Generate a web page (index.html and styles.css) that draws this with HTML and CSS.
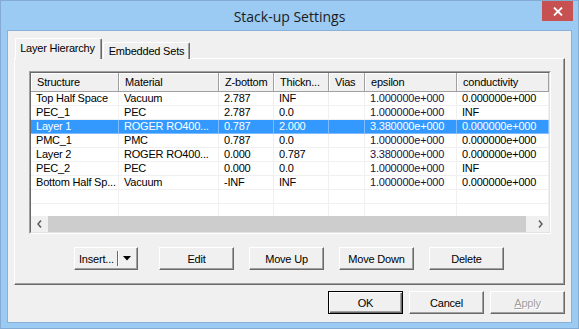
FILE: index.html
```html
<!DOCTYPE html>
<html>
<head>
<meta charset="utf-8">
<link rel="stylesheet" href="styles.css">
</head>
<body>
<div class="window">
  <div class="titlebar">
    <span class="title">Stack-up Settings</span>
    <div class="close">
      <svg width="10" height="9" viewBox="0 0 10 9"><path d="M1 0.5 L9 8.5 M9 0.5 L1 8.5" stroke="#fff" stroke-width="1.8" fill="none"/></svg>
    </div>
  </div>
  <div class="client">
    <div class="tabctl">
      <div class="tabs">
        <div class="tab active">Layer Hierarchy</div>
        <div class="tab">Embedded Sets</div>
      </div>
      <div class="panel">
        <div class="listview">
          <div class="lv-inner">
            <div class="row hdr">
              <div class="c">Structure</div><div class="c">Material</div><div class="c">Z-bottom</div><div class="c">Thickn...</div><div class="c">Vias</div><div class="c">epsilon</div><div class="c">conductivity</div>
            </div>
            <div class="rows">
              <div class="row"><div class="c">Top Half Space</div><div class="c">Vacuum</div><div class="c">2.787</div><div class="c">INF</div><div class="c"></div><div class="c eps">1.000000e+000</div><div class="c">0.000000e+000</div></div>
              <div class="row"><div class="c">PEC_1</div><div class="c">PEC</div><div class="c">2.787</div><div class="c">0.0</div><div class="c"></div><div class="c eps">1.000000e+000</div><div class="c">INF</div></div>
              <div class="row sel"><div class="c">Layer 1</div><div class="c">ROGER RO400...</div><div class="c">0.787</div><div class="c">2.000</div><div class="c"></div><div class="c eps">3.380000e+000</div><div class="c">0.000000e+000</div></div>
              <div class="row"><div class="c">PMC_1</div><div class="c">PMC</div><div class="c">0.787</div><div class="c">0.0</div><div class="c"></div><div class="c eps">1.000000e+000</div><div class="c">0.000000e+000</div></div>
              <div class="row"><div class="c">Layer 2</div><div class="c">ROGER RO400...</div><div class="c">0.000</div><div class="c">0.787</div><div class="c"></div><div class="c eps">3.380000e+000</div><div class="c">0.000000e+000</div></div>
              <div class="row"><div class="c">PEC_2</div><div class="c">PEC</div><div class="c">0.000</div><div class="c">0.0</div><div class="c"></div><div class="c eps">1.000000e+000</div><div class="c">INF</div></div>
              <div class="row"><div class="c">Bottom Half Sp...</div><div class="c">Vacuum</div><div class="c">-INF</div><div class="c">INF</div><div class="c"></div><div class="c eps">1.000000e+000</div><div class="c">0.000000e+000</div></div>
              <div class="row"><div class="c"></div><div class="c"></div><div class="c"></div><div class="c"></div><div class="c"></div><div class="c"></div><div class="c"></div></div>
              <div class="row"><div class="c"></div><div class="c"></div><div class="c"></div><div class="c"></div><div class="c"></div><div class="c"></div><div class="c"></div></div>
            </div>
            <div class="hscroll">
              <div class="arrow"><svg width="5" height="8" viewBox="0 0 5 8"><path d="M4 0.5 L1 4 L4 7.5" stroke="#606060" stroke-width="1.6" fill="none"/></svg></div>
              <div class="thumb"></div>
              <div class="arrow"><svg width="5" height="8" viewBox="0 0 5 8"><path d="M1 0.5 L4 4 L1 7.5" stroke="#606060" stroke-width="1.6" fill="none"/></svg></div>
            </div>
          </div>
        </div>
        <div class="btnrow">
          <div class="btn split"><span class="lbl">Insert...</span><span class="sep"></span><svg class="dd" width="8" height="5" viewBox="0 0 8 5"><path d="M0 0 H8 L4 4.5 Z" fill="#000"/></svg></div>
          <div class="btn">Edit</div>
          <div class="btn">Move Up</div>
          <div class="btn">Move Down</div>
          <div class="btn">Delete</div>
        </div>
      </div>
    </div>
    <div class="dlgbtns">
      <div class="btn default">OK</div>
      <div class="btn">Cancel</div>
      <div class="btn disabled"><span class="ul">A</span>pply</div>
    </div>
  </div>
</div>
</body>
</html>
```
FILE: styles.css
```css
* { box-sizing: border-box; }
html, body { margin: 0; padding: 0; }
body {
  width: 579px; height: 329px; overflow: hidden;
  background: #9BCBF3;
  font-family: "Liberation Sans", Arial, sans-serif;
  font-size: 11px; letter-spacing: -0.2px; color: #000;
}
.window {
  width: 579px; height: 329px;
  border: 1px solid #83ABD3;
  background: #9BCBF3;
  display: flex; flex-direction: column;
}
.titlebar {
  height: 29px; flex: none;
  display: grid; grid-template-columns: 1fr auto 1fr; align-items: start;
}
.title {
  grid-column: 2;
  font-family: "Open Sans", "Noto Sans", sans-serif;
  font-size: 14px; letter-spacing: 0; line-height: 29px; color: #1b1b1b;
  padding-top: 1px;
}
.close {
  grid-column: 3; justify-self: end;
  width: 31px; height: 20px; margin-right: 5px;
  background: #C75050;
  display: flex; align-items: center; justify-content: center;
  padding-left: 1px;
}
.client {
  margin: 0 6px; height: 293px; flex: none;
  border: 1px solid #88B0D8;
  background: #F0F0F0;
  display: flex; flex-direction: column;
}
.tabctl { margin: 7px 6px 0 6px; width: 551px; }
.tabs {
  display: flex; align-items: flex-end; height: 21px;
  padding-left: 1px; gap: 1px;
  position: relative; z-index: 1;
}
.tab {
  width: 87px; height: 17px;
  background: #F0F0F0;
  border-top: 1px solid #fff; border-left: 1px solid #fff; border-right: 1px solid #696969;
  box-shadow: inset -1px 0 #A0A0A0;
  border-radius: 2px 2px 0 0;
  text-align: center; line-height: 16px; white-space: nowrap;
}
.tab.active { height: 21px; line-height: 19px; padding-right: 2px; }
.panel {
  height: 227px; margin-top: -1px;
  border-top: 1px solid #fff; border-left: 1px solid #fff;
  border-right: 1px solid #696969; border-bottom: 1px solid #696969;
  box-shadow: inset -1px -1px #A0A0A0;
  padding: 12px 13px 0 14px;
}
.listview {
  width: 522px; height: 163px;
  border: 1px solid; border-color: #A0A0A0 #fff #fff #A0A0A0;
}
.lv-inner {
  height: 161px;
  border: 1px solid; border-color: #696969 #E3E3E3 #E3E3E3 #696969;
  background: #fff;
  display: flex; flex-direction: column;
}
.row {
  display: grid;
  grid-template-columns: 88px 100px 55px 55px 36px 92px 92px;
  height: 14px; flex: none;
}
.row .c {
  border-right: 1px solid #F0F0F0; border-bottom: 1px solid #F0F0F0;
  padding-left: 5px; line-height: 13px;
  white-space: nowrap; overflow: hidden;
}
.row .c.eps { color: #24104a; }
.row.sel { background: #3399FF; color: #fff; }
.row.sel .c { border-color: #7DBDFF; color: #fff; }
.row.hdr { height: 19px; background: #F0F0F0; }
.row.hdr .c {
  border-right: 1px solid #A0A0A0; border-bottom: 1px solid #A0A0A0;
  box-shadow: inset 1px 1px #fff;
  padding-left: 6px; line-height: 18px;
}
.rows { height: 124px; overflow: hidden; flex: none; }
.hscroll {
  height: 16px; flex: none;
  display: flex; background: #F0F0F0;
}
.arrow { width: 17px; display: flex; align-items: center; justify-content: center; }
.thumb { flex: 1; background: #CDCDCD; margin-right: 6px; }
.btnrow {
  display: flex; justify-content: center; gap: 15px;
  margin-top: 13px; padding-right: 2px;
}
.btn {
  width: 75px; height: 23px;
  background: #F0F0F0;
  border: 1px solid; border-color: #fff #696969 #696969 #fff;
  box-shadow: inset -1px -1px #A0A0A0;
  display: flex; align-items: center; justify-content: center;
  white-space: nowrap;
}
.btnrow .split { width: 64px; margin-right: 6px; justify-content: flex-start; padding-left: 4px; }
.split .lbl { width: 38px; }
.split .sep { width: 1px; height: 15px; background: #696969; box-shadow: 1px 0 #fff; }
.split .dd { margin-left: 5px; }
.dlgbtns {
  display: flex; justify-content: flex-end; gap: 6px;
  margin: 6px 6px 0 0;
}
.btn.default {
  border: 1px solid #000;
  box-shadow: inset 1px 1px #fff, inset -1px -1px #696969, inset -2px -2px #A0A0A0;
}
.btn.disabled { color: #A0A0A0; text-shadow: 1px 1px #fff; }
.ul { text-decoration: underline; }
```
